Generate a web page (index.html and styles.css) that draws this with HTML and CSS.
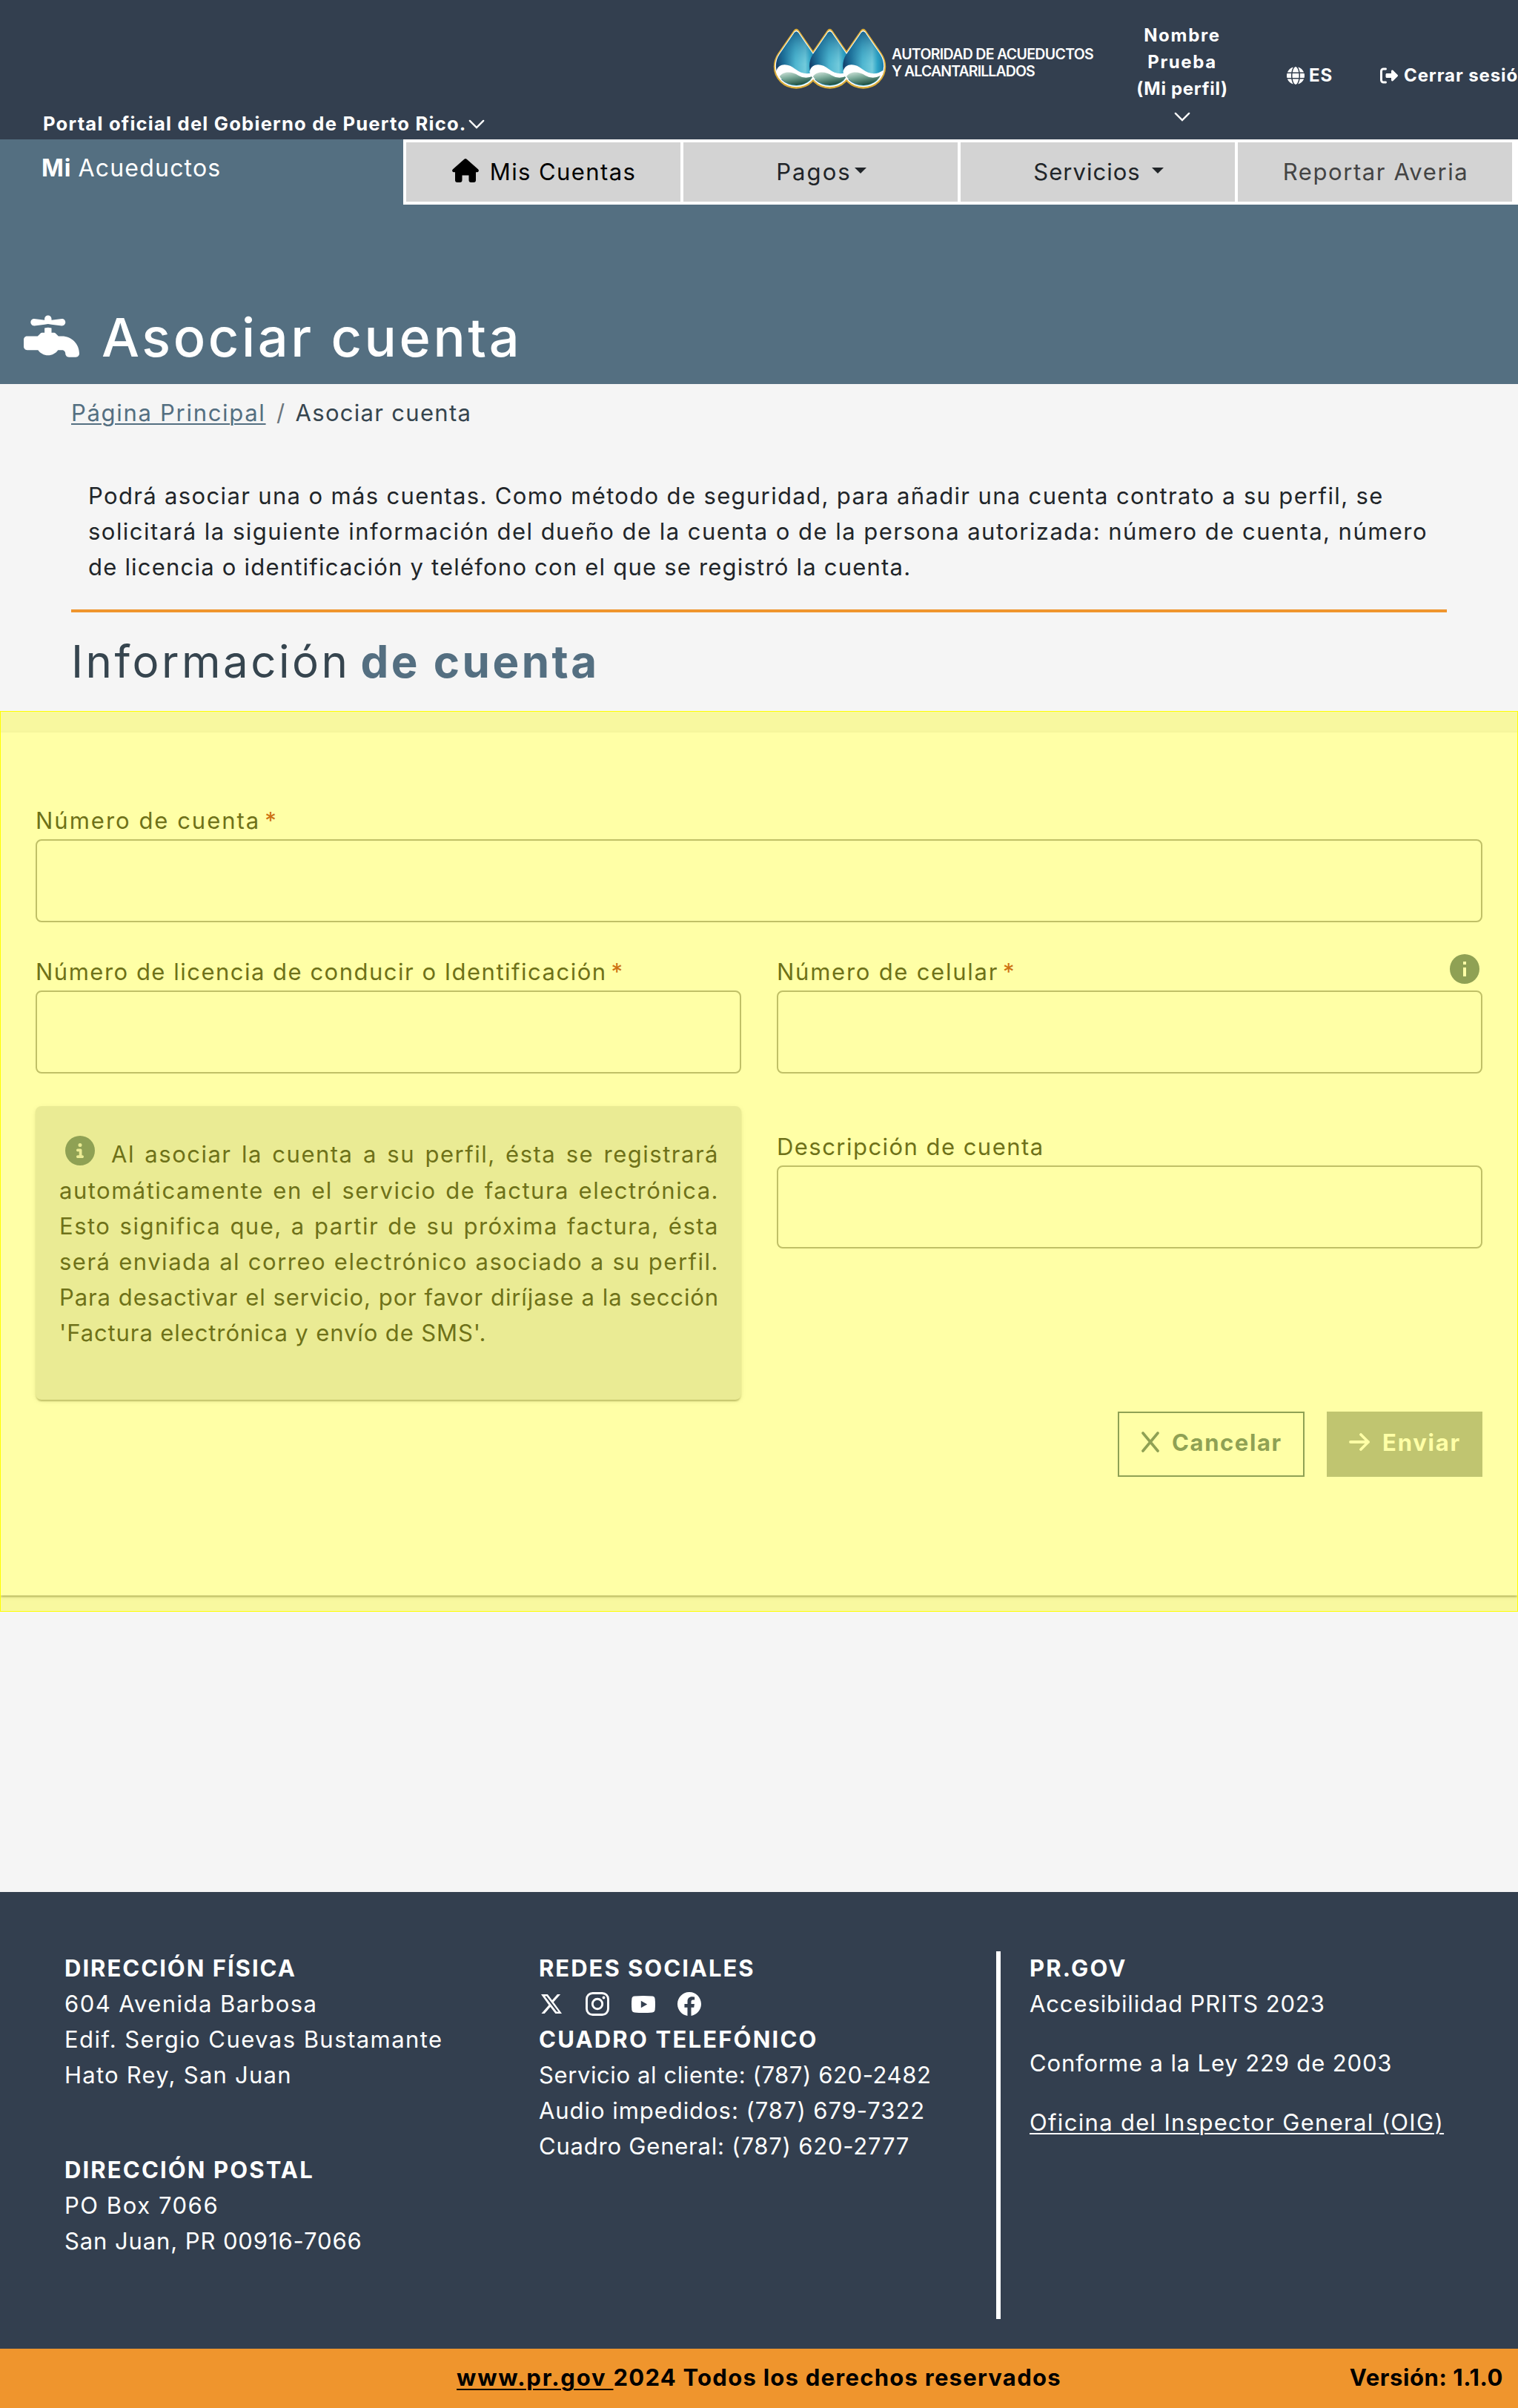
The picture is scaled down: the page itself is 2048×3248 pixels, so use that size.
FILE: index.html
```html
<!DOCTYPE html>
<html lang="es">
<head>
<meta charset="utf-8">
<title>Asociar cuenta - Mi Acueductos</title>
<link rel="stylesheet" href="styles.css">
</head>
<body>
<header class="topbar">
  <div class="portal">
    <span class="t-portal">Portal oficial del Gobierno de Puerto Rico.</span>
    <svg class="chev" viewBox="0 0 24 14" fill="none" stroke="#fff" stroke-width="2.6" stroke-linecap="round"><path d="M2 2l10 10L22 2"/></svg>
  </div>
  <div class="logo">
    <svg class="drops" viewBox="66 54 460 250">
      <defs>
        <path id="drop" d="M-9 64Q0 53 9 64L74 158Q90 182 90 211A90 87 0 0 1-90 211Q-90 182-74 158Z"/>
        <linearGradient id="water" x1="0" y1="0" x2="1" y2="0">
          <stop offset="0" stop-color="#123c68"/><stop offset=".2" stop-color="#1d6d97"/><stop offset=".48" stop-color="#4fb6d0"/><stop offset=".72" stop-color="#72cadb"/><stop offset=".85" stop-color="#2ca3c6"/><stop offset="1" stop-color="#1c7ba6"/>
        </linearGradient>
        <linearGradient id="shade" x1="0" y1="0" x2="0" y2="1">
          <stop offset="0" stop-color="#0d4a77" stop-opacity=".75"/><stop offset=".6" stop-color="#2a9cc0" stop-opacity="0"/>
        </linearGradient>
        <linearGradient id="green" x1="0" y1="0" x2=".5" y2="1">
          <stop offset="0" stop-color="#d2e5dc"/><stop offset=".45" stop-color="#7aaa99"/><stop offset="1" stop-color="#1d4f42"/>
        </linearGradient>
        <g id="fill">
          <use href="#drop" fill="url(#water)" transform="translate(0 14) scale(.92)"/>
          <use href="#drop" fill="url(#shade)" transform="translate(0 14) scale(.92)"/>
          <path d="M-82 232C-74 192-30 198-5 220Q40 254 80 226Q78 250 66 264Q30 262 0 262H-66Q-78 250-82 232Z" fill="#fff"/>
          <path d="M-68 250C-50 225-12 232 8 246Q38 264 70 247A76 64 0 0 1-68 250Z" fill="url(#green)"/>
        </g>
      </defs>
      <g fill="#dcae3a" stroke="#dcae3a" stroke-width="4"><use href="#drop" x="160"/><use href="#drop" x="296"/><use href="#drop" x="432"/></g>
      <g fill="#fff" transform="translate(0 7)"><use href="#drop" transform="translate(160) scale(.96)"/><use href="#drop" transform="translate(296) scale(.96)"/><use href="#drop" transform="translate(432) scale(.96)"/></g>
      <use href="#fill" x="160"/><use href="#fill" x="296"/><use href="#fill" x="432"/>
    </svg>
    <div class="logo-text"><span class="t-logo1">AUTORIDAD DE ACUEDUCTOS</span><span class="t-logo2">Y ALCANTARILLADOS</span></div>
  </div>
  <div class="profile">
    <span class="t-nombre">Nombre</span><span class="t-prueba">Prueba</span><span class="t-perfil">(Mi perfil)</span>
    <svg class="chev" viewBox="0 0 24 14" fill="none" stroke="#fff" stroke-width="2.6" stroke-linecap="round"><path d="M2 2l10 10L22 2"/></svg>
  </div>
  <div class="lang">
    <svg class="ic24" viewBox="0 0 512 512" fill="#fff"><path d="M352 256c0 22.2-1.2 43.6-3.3 64H163.3c-2.200-20.400-3.300-41.800-3.300-64s1.200-43.600 3.300-64H348.700c2.200 20.400 3.300 41.800 3.300 64zm28.800-64H503.900c5.300 20.500 8.100 41.900 8.100 64s-2.800 43.500-8.100 64H380.800c2.100-20.600 3.200-42 3.200-64s-1.100-43.400-3.200-64zm112.600-32H376.700c-10-63.900-29.800-117.400-55.300-151.600c78.300 20.700 142 77.500 171.900 151.600zm-149.100 0H167.700c6.100-36.400 15.500-68.600 27-94.700c10.500-23.600 22.200-40.700 33.500-51.500C239.400 3.200 248.700 0 256 0s16.600 3.200 27.800 13.800c11.300 10.800 23 27.900 33.500 51.500c11.600 26 20.900 58.200 27 94.700zm-209 0H18.600C48.600 85.900 112.200 29.100 190.600 8.400C165.100 42.600 145.300 96.100 135.300 160zM8.100 192H131.200c-2.100 20.600-3.200 42-3.200 64s1.100 43.400 3.200 64H8.100C2.800 299.500 0 278.100 0 256s2.800-43.500 8.100-64zM194.700 446.600c-11.600-26-20.900-58.200-27-94.600H344.300c-6.100 36.400-15.500 68.600-27 94.600c-10.500 23.600-22.200 40.700-33.500 51.500C272.600 508.800 263.300 512 256 512s-16.600-3.200-27.800-13.800c-11.300-10.800-23-27.900-33.500-51.500zM135.300 352c10 63.900 29.800 117.400 55.300 151.600C112.200 482.900 48.600 426.100 18.600 352H135.300zm358.100 0c-30 74.100-93.600 130.900-171.900 151.600c25.500-34.200 45.200-87.700 55.300-151.600H493.400z"/></svg>
    <span class="t-es">ES</span>
  </div>
  <div class="logout">
    <svg class="ic24" viewBox="0 0 512 512" fill="#fff"><path d="M502.600 278.600c12.500-12.500 12.500-32.800 0-45.300l-128-128c-9-9-22.500-12-34.900-7s-19.700 16.600-19.700 29.700v64H192c-17.700 0-32 14.300-32 32v64c0 17.700 14.300 32 32 32h128v64c0 12.900 7.800 24.600 19.800 29.600s25.700 2.200 34.900-6.900zM160 96c17.700 0 32-14.300 32-32s-14.300-32-32-32H96C43 32 0 75 0 128v256c0 53 43 96 96 96h64c17.700 0 32-14.300 32-32s-14.300-32-32-32H96c-17.700 0-32-14.300-32-32V128c0-17.700 14.300-32 32-32z"/></svg>
    <span class="t-cerrar">Cerrar sesión</span>
  </div>
</header>

<section class="hero">
  <div class="navrow">
    <div class="brand"><b class="t-mi">Mi</b> <span class="t-acued">Acueductos</span></div>
    <nav class="nav">
      <a class="cell home"><svg class="house" viewBox="0 0 36 32" fill="#000"><path d="M16.300.8a2.600 2.600 0 0 1 3.400 0L35 14.200c1.700 1.500.9 4-1.200 4H32V29a3 3 0 0 1-3 3h-3.500a3 3 0 0 1-3-3v-6.500h-9V29a3 3 0 0 1-3 3H7a3 3 0 0 1-3-3V18.200H2.200c-2.100 0-2.900-2.500-1.200-4z"/></svg><span class="t-ctas">Mis Cuentas</span></a>
      <a class="cell"><span class="t-pagos">Pagos</span><i class="caret"></i></a>
      <a class="cell"><span class="t-serv">Servicios</span><i class="caret wide"></i></a>
      <a class="cell muted"><span class="t-averia">Reportar Averia</span></a>
    </nav>
  </div>
  <h1 class="title">
    <svg class="faucet" viewBox="0 64 512 384" fill="#fff"><path d="M192 96v12L96 96c-17.700 0-32 14.300-32 32s14.300 32 32 32l96-12 32-4 32 4 96 12c17.700 0 32-14.300 32-32s-14.300-32-32-32l-96 12V96c0-17.700-14.300-32-32-32s-32 14.300-32 32zM32 256c-17.700 0-32 14.300-32 32v64c0 17.700 14.300 32 32 32h100.100c20.200 29 53.900 48 91.900 48s71.700-19 91.900-48H352c17.700 0 32 14.300 32 32s14.300 32 32 32h64c17.700 0 32-14.300 32-32 0-88.400-71.600-160-160-160h-32l-22.600-22.600c-6-6-14.100-9.400-22.600-9.400H256v-43.800l-32-4-32 4V224h-18.700c-8.500 0-16.600 3.400-22.600 9.400L128 256z"/></svg>
    <span>Asociar cuenta</span>
  </h1>
</section>

<main>
  <div class="breadcrumb"><a class="t-bc1">Página Principal</a><span class="slash">/</span><span class="t-bc2">Asociar cuenta</span></div>
  <p class="intro">
    <span class="t-p1">Podrá asociar una o más cuentas. Como método de seguridad, para añadir una cuenta contrato a su perfil, se</span>
    <span class="t-p2">solicitará la siguiente información del dueño de la cuenta o de la persona autorizada: número de cuenta, número</span>
    <span class="t-p3">de licencia o identificación y teléfono con el que se registró la cuenta.</span>
  </p>
  <hr class="rule">
  <h2 class="subtitle"><span class="t-h2a">Información</span><b class="t-h2b">de cuenta</b></h2>

  <section class="form-zone">
    <form class="card">
      <div class="field full"><label><span class="t-l1">Número de cuenta</span><i class="req">*</i></label><div class="box"></div></div>
      <div class="field"><label><span class="t-l2">Número de licencia de conducir o Identificación</span><i class="req">*</i></label><div class="box"></div></div>
      <div class="field"><label><span class="t-l3">Número de celular</span><i class="req">*</i><svg class="info end" viewBox="2 2 20 20"><path fill="#546f81" d="M12 2a10 10 0 1 0 0 20 10 10 0 0 0 0-20zm1 15h-2v-6h2zm0-8h-2V7h2z"/></svg></label><div class="box"></div></div>
      <div class="notice">
        <div class="line"><svg class="info" viewBox="0 0 512 512"><path fill="#546f81" d="M256 512A256 256 0 1 0 256 0a256 256 0 1 0 0 512zM216 336h24v-64h-24c-13.300 0-24-10.700-24-24s10.700-24 24-24h48c13.300 0 24 10.700 24 24v88h8c13.300 0 24 10.700 24 24s-10.700 24-24 24h-80c-13.300 0-24-10.700-24-24s10.700-24 24-24zm40-208a32 32 0 1 1 0 64 32 32 0 1 1 0-64z"/></svg><span class="just">Al asociar la cuenta a su perfil, ésta se registrará</span></div>
        <span class="just">automáticamente en el servicio de factura electrónica.</span>
        <span class="just">Esto significa que, a partir de su próxima factura, ésta</span>
        <span class="just">será enviada al correo electrónico asociado a su perfil.</span>
        <span class="just tight">Para desactivar el servicio, por favor diríjase a la sección</span>
        <span class="t-sms">'Factura electrónica y envío de SMS'.</span>
      </div>
      <div class="field desc"><label><span class="t-l4">Descripción de cuenta</span></label><div class="box"></div></div>
      <div class="actions">
        <a class="btn outline"><svg class="x-ic" viewBox="0 0 24 28" fill="none" stroke="#546f81" stroke-width="3.600" stroke-linecap="round"><path d="M2 2l20 24M22 2L2 26"/></svg><span class="t-canc">Cancelar</span></a>
        <a class="btn solid"><svg class="arr" viewBox="0 0 28 24" fill="none" stroke="#fff" stroke-width="3.800" stroke-linecap="round" stroke-linejoin="round"><path d="M2 12h24M16 2l10 10-10 10"/></svg><span class="t-env">Enviar</span></a>
      </div>
    </form>
  </section>
</main>

<footer class="footer">
  <div class="col address">
    <b class="t-df">DIRECCIÓN FÍSICA</b><span class="t-604">604 Avenida Barbosa</span><span class="t-edif">Edif. Sergio Cuevas Bustamante</span><span class="t-hato">Hato Rey, San Juan</span>
    <b class="t-dp">DIRECCIÓN POSTAL</b><span class="t-po">PO Box 7066</span><span class="t-sj">San Juan, PR 00916-7066</span>
  </div>
  <div class="col contact">
    <b class="t-redes">REDES SOCIALES</b>
    <div class="social">
      <svg class="s-x" viewBox="0 0 28 26" fill="#fff"><path fill-rule="evenodd" d="M0 0h8.900l6 8L21.900 0h4.200l-9.300 10.600L28 26h-8.700l-6.800-9L4.700 26H.4l10-11.400zM5 2.400L21 23.500h2.500L7.500 2.400z"/></svg>
      <svg class="s-32" viewBox="0 0 32 32" fill="none" stroke="#fff" stroke-width="2.900"><rect x="1.500" y="1.500" width="29" height="29" rx="8"/><circle cx="16" cy="16" r="6.700"/><circle cx="24.500" cy="7.500" r="1.900" fill="#fff" stroke="none"/></svg>
      <svg class="s-yt" viewBox="0 0 32 23"><path fill="#fff" d="M4 .6Q16-.6 28 .6q3.200.4 3.600 3.400.8 7.500 0 15-.4 3-3.600 3.400-12 1.200-24 0-3.200-.4-3.600-3.400-.8-7.500 0-15Q.800 1 4 .6z"/><path fill="#333f4f" d="M12.800 6.700v9.600l8.400-4.800z"/></svg>
      <svg class="s-32" viewBox="0 0 16 16" fill="#fff"><path d="M16 8.049c0-4.446-3.582-8.050-8-8.050C3.580 0-.002 3.603-.002 8.050c0 4.017 2.926 7.347 6.750 7.951v-5.625h-2.030V8.050H6.750V6.275c0-2.017 1.195-3.131 3.022-3.131.876 0 1.791.157 1.791.157v1.980h-1.009c-.993 0-1.303.621-1.303 1.258v1.510h2.218l-.354 2.326H9.250V16c3.824-.604 6.750-3.934 6.750-7.951z"/></svg>
    </div>
    <b class="t-ct">CUADRO TELEFÓNICO</b><span class="t-sc">Servicio al cliente: (787) 620-2482</span><span class="t-ai">Audio impedidos: (787) 679-7322</span><span class="t-cg">Cuadro General: (787) 620-2777</span>
  </div>
  <div class="col gov">
    <b class="t-prg">PR.GOV</b><span class="t-acc">Accesibilidad PRITS 2023</span><span class="t-conf">Conforme a la Ley 229 de 2003</span><a class="t-ofi">Oficina del Inspector General (OIG)</a>
  </div>
</footer>
<div class="bottombar"><div class="rights"><a class="t-www">www.pr.gov </a><span class="t-todos">2024 Todos los derechos reservados</span></div><span class="t-ver">Versión: 1.1.0</span></div>
</body>
</html>
```
FILE: styles.css
```css
* { box-sizing: border-box; }
body { margin: 0; width: 2048px; height: 3248px; overflow: hidden; background: #f5f5f5; color: #212529; font: 400 31px/48px Inter, "Open Sans", sans-serif; display: flex; flex-direction: column; }
svg { display: block; flex: none; }
span, label, b, a { white-space: pre; }
i { font-style: normal; }
b { font-weight: 700; }

/* top bar */
.topbar { height: 188px; flex: none; background: #333f4f; color: #fff; font-size: 24px; line-height: 36px; font-weight: 700; display: grid; grid-template-columns: 985px 445px 214px 160px 186px; padding-left: 58px; }
.portal { align-self: end; display: flex; align-items: center; padding-bottom: 3px; font-size: 25.6px; }
.portal > span { width: 574px; }
.chev { width: 22px; height: 13px; }
.logo { display: flex; padding-top: 38px; gap: 7px; }
.drops { width: 153px; height: 83px; }
.logo-text { display: flex; flex-direction: column; font-size: 19.5px; line-height: 23px; font-weight: 600; padding-top: 24px; }
.profile { display: flex; flex-direction: column; align-items: center; padding-top: 30px; }
.profile .chev { margin-top: 13px; }
.lang, .logout { display: flex; align-items: center; align-self: start; height: 36px; margin-top: 84px; gap: 6px; }
.lang { padding-left: 34px; }
.logout { gap: 8px; }
.ic24 { width: 24px; height: 24px; }

/* hero */
.hero { height: 330px; flex: none; background: #546f81; color: #fff; }
.navrow { display: flex; height: 88px; }
.brand { width: 544px; padding: 15px 0 0 56px; font-size: 32px; line-height: 48px; }
.nav { flex: 1; background: #fff; padding: 4px 8px 4px 4px; display: grid; grid-template-columns: repeat(4, 370px); gap: 4px; }
.cell { background: #d3d3d3; color: #212529; display: flex; align-items: center; justify-content: center; padding: 0 0 1px 2px; }
.home { color: #000; }
.muted { color: #444; }
.house { width: 36px; height: 32px; margin: -3px 15px 0 0; }
.caret { border: 8px solid transparent; border-top: 8px solid currentColor; border-bottom: 0; margin: -3px 0 0 4px; }
.caret.wide { margin-left: 15px; }
.title { margin: 0; padding: 129px 0 0 32px; display: flex; font-size: 72px; line-height: 100px; font-weight: 500; letter-spacing: 3.6px; }
.faucet { width: 75px; height: 57px; margin: 20px 30px 0 0; }

/* intro */
.breadcrumb { display: flex; padding: 15px 0 0 96px; color: #36454f; }
.breadcrumb a { color: #546f81; text-decoration: underline; text-decoration-thickness: 2px; text-underline-offset: 3px; }
.slash { width: 40px; text-align: center; color: #6c757d; }
.intro { margin: 64px 0 0 119px; display: flex; flex-direction: column; }
.rule { margin: 33px 96px 0; border: 0; height: 4px; background: #ef952d; }
.subtitle { margin: 0; padding: 30px 0 0 96px; height: 133px; display: flex; gap: 14px; font-size: 60px; line-height: 72px; font-weight: 400; color: #36454f; }
.subtitle b { color: #546f81; }

/* form with highlight layer */
.form-zone { position: relative; height: 1215px; padding-top: 29px; }
.form-zone::after { content: ""; position: absolute; inset: 0; background: rgba(255, 255, 0, .35); border: 1px solid #ff0; }
.card { height: 1164px; background: #fff; box-shadow: 0 4px 2px -2px rgba(0,0,0,.2), 0 2px 2px rgba(0,0,0,.14), 0 2px 6px rgba(0,0,0,.12); padding: 95px 48px 0; display: grid; grid-template-columns: 952px 952px; column-gap: 48px; align-content: start; }
.full { grid-column: 1 / 3; }
.field { margin-bottom: 43px; }
.field label { display: flex; align-items: center; height: 49px; padding-bottom: 1px; }
.req { color: #b3261e; margin-left: 6px; }
.box { height: 112px; border: 2px solid #9e9e9e; border-radius: 8px; }
.info { width: 40px; height: 40px; }
.end { margin: -9px 4px 0 auto; }
.notice { margin-top: 1px; height: 396px; border-radius: 8px; background: #dfe1e3; padding: 41px 32px 0; display: flex; flex-direction: column; box-shadow: 0 4px 2px -2px rgba(0,0,0,.2), 0 2px 2px rgba(0,0,0,.14), 0 2px 6px rgba(0,0,0,.12); }
.line { display: flex; height: 49px; }
.line .info { margin: -1px 22px 0 8px; }
.line .just { flex: 1; }
.just { text-align: justify; text-align-last: justify; white-space: normal; letter-spacing: 1.5px; margin-right: -2px; }
.tight { letter-spacing: .9px; }
.desc { padding-top: 32px; margin: 0; }
.actions { grid-column: 1 / 3; display: flex; justify-content: flex-end; gap: 30px; padding-top: 16px; }
.btn { height: 88px; display: flex; align-items: center; padding-bottom: 4px; font-weight: 700; }
.btn svg { margin-top: -2px; }
.outline { width: 252px; border: 2px solid #546f81; color: #546f81; padding-left: 30px; gap: 17px; }
.solid { width: 210px; background: #9ea6ac; color: #fff; padding-left: 30px; gap: 17px; }
.x-ic { width: 24px; height: 28px; }
.arr { width: 28px; height: 24px; }

/* footer */
.footer { margin-top: auto; height: 616px; flex: none; background: #333f4f; color: #fff; display: flex; padding: 80px 0 40px 87px; }
.col { display: flex; flex-direction: column; align-items: flex-start; margin-top: -1px; }
.address { width: 640px; }
.t-dp { margin-top: 80px; }
.contact { width: 617px; }
.social { display: flex; align-items: center; height: 48px; padding-left: 3px; }
.s-x { width: 28px; height: 26px; margin-right: 32px; }
.s-32 { width: 32px; height: 32px; }
.s-yt { width: 32px; height: 23px; margin: 0 30px; }
.gov { border-left: 6px solid #fff; padding-left: 39px; margin-top: 0; }
.t-prg { margin-top: -1px; }
.t-acc, .t-conf { margin-bottom: 32px; }
.t-ofi { text-decoration: underline; text-decoration-thickness: 2px; text-underline-offset: 3px; }
.bottombar { height: 80px; flex: none; background: #ef952d; color: #000; font-weight: 700; display: flex; justify-content: space-between; padding: 15px 20px 0 616px; }
.t-www { text-decoration: underline; text-decoration-thickness: 2px; text-underline-offset: 4px; }

/* tracking per text */
.t-portal { letter-spacing: 1.22px; }
.t-logo1 { letter-spacing: -.67px; }
.t-logo2 { letter-spacing: -.88px; }
.t-nombre { letter-spacing: 1.7px; }
.t-prueba { letter-spacing: 1.6px; }
.t-perfil { letter-spacing: .7px; }
.t-es { letter-spacing: 1px; }
.t-cerrar { letter-spacing: .9px; }
.t-mi { letter-spacing: 1px; }
.t-acued { letter-spacing: 1.2px; }
.t-ctas { letter-spacing: 1.4px; }
.t-pagos { letter-spacing: 2.1px; }
.t-serv { letter-spacing: 1.02px; }
.t-averia { letter-spacing: 1.6px; }
.t-bc1 { letter-spacing: 1.7px; }
.t-bc2 { letter-spacing: 1.3px; }
.t-p1 { letter-spacing: 1.35px; }
.t-p2 { letter-spacing: 1.47px; }
.t-p3 { letter-spacing: 1.21px; }
.t-h2a { letter-spacing: 3.5px; }
.t-h2b { letter-spacing: 3.5px; }
.t-l1 { letter-spacing: 2px; }
.t-l2 { letter-spacing: 1.5px; }
.t-l3 { letter-spacing: 1.75px; }
.t-l4 { letter-spacing: 1.46px; }
.t-sms { letter-spacing: .9px; }
.t-canc { letter-spacing: 1.6px; }
.t-env { letter-spacing: 1.8px; }
.t-df { letter-spacing: 2px; }
.t-604 { letter-spacing: 1.45px; }
.t-edif { letter-spacing: 1.45px; }
.t-hato { letter-spacing: 1.25px; }
.t-dp { letter-spacing: 2.14px; }
.t-po { letter-spacing: 1.55px; }
.t-sj { letter-spacing: .9px; }
.t-redes { letter-spacing: 2px; }
.t-ct { letter-spacing: 2.2px; }
.t-sc { letter-spacing: .6px; }
.t-ai { letter-spacing: .95px; }
.t-cg { letter-spacing: .79px; }
.t-prg { letter-spacing: 2.2px; }
.t-acc { letter-spacing: .88px; }
.t-conf { letter-spacing: .86px; }
.t-ofi { letter-spacing: 1.32px; }
.t-www { letter-spacing: 1.8px; }
.t-todos { letter-spacing: 1.26px; }
.t-ver { letter-spacing: .6px; }
```
